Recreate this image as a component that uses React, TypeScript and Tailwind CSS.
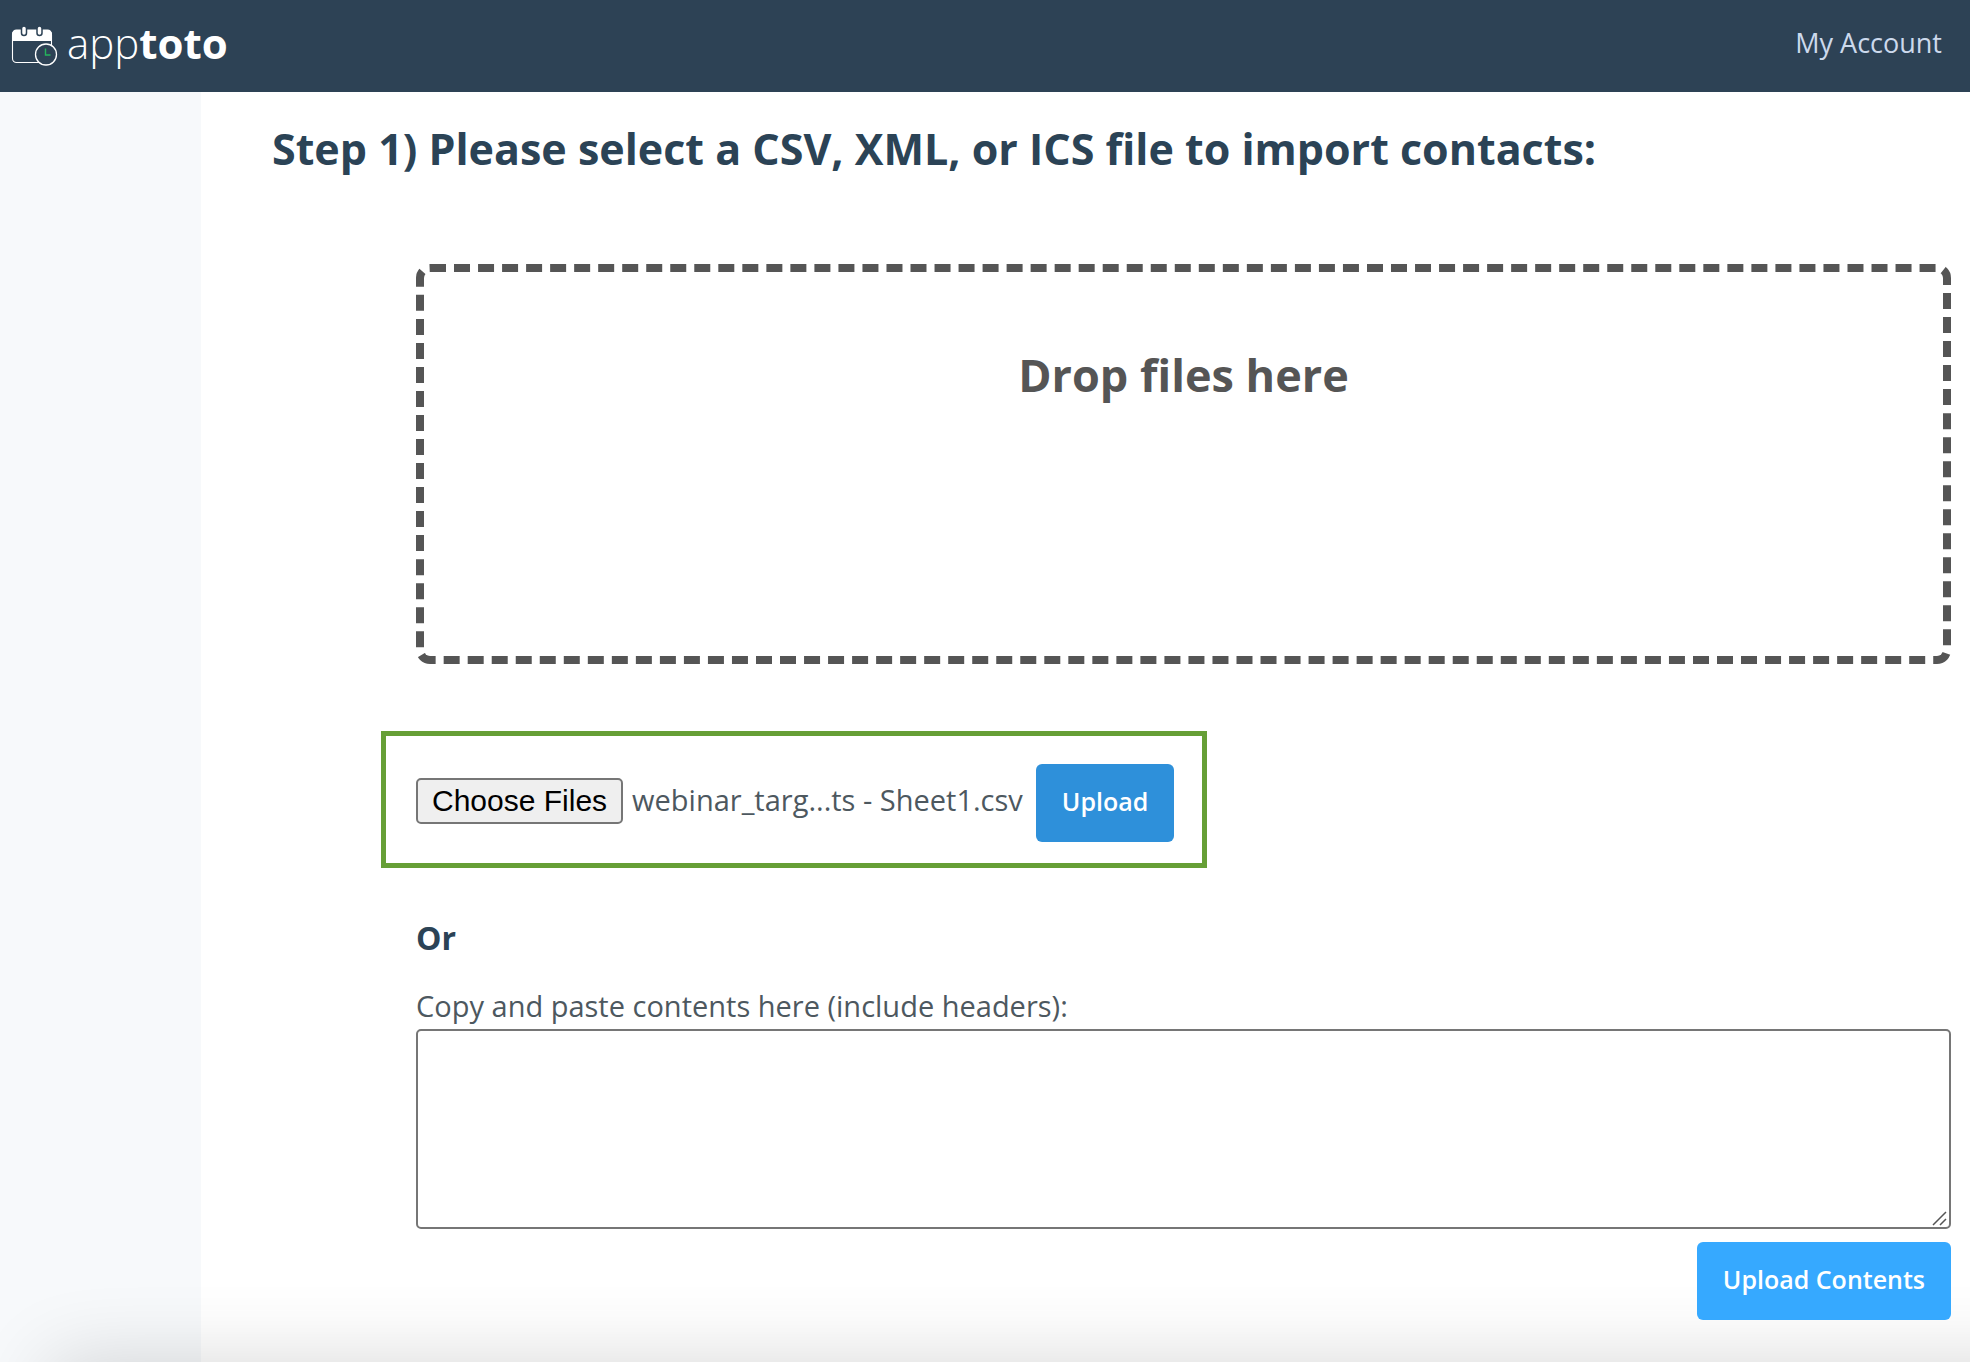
import { useRef, useState } from "react";

function LogoMark() {
  return (
    <svg className="h-[46px] w-[48px] shrink-0" viewBox="0 -4 48 46" fill="none" aria-hidden="true">
      <rect x="1.5" y="6.5" width="39" height="32" rx="4" stroke="#fff" strokeWidth="1.1" />
      <path d="M1 17V10a4.5 4.5 0 0 1 4.5-4.5H36.5A4.5 4.5 0 0 1 41 10V17Z" fill="#fff" />
      <rect x="10.5" y="2" width="5" height="9.5" rx="2.5" fill="#fff" stroke="#2d4255" strokeWidth="1.5" />
      <rect x="26" y="2" width="5" height="9.5" rx="2.5" fill="#fff" stroke="#2d4255" strokeWidth="1.5" />
      <circle cx="35" cy="30.5" r="10.5" fill="#2d4255" stroke="#fff" strokeWidth="1.3" />
      <path d="M34.5 24.5V31H39.5" stroke="#25b45c" strokeWidth="1.4" />
    </svg>
  );
}

function Header() {
  return (
    <header className="flex h-[92px] items-center justify-between bg-[#2d4255] pr-[28px] pb-[6px] pl-[11px]">
      <a href="#" aria-label="apptoto" className="flex items-center gap-[8px] text-[42px] leading-[56px] text-white">
        <LogoMark />
        <span>
          <span className="font-light">app</span>
          <span className="font-bold">toto</span>
        </span>
      </a>
      <a href="#account" className="text-[27px] leading-[40px] text-[#ccd9ec]">
        My Account
      </a>
    </header>
  );
}

function FilePicker() {
  const inputRef = useRef<HTMLInputElement>(null);
  const [name, setName] = useState("webinar_targ...ts - Sheet1.csv");
  return (
    <form
      className="-ml-[35px] mt-[67px] flex w-fit items-baseline border-[5px] border-[#669f36] pt-[28px] pr-[28px] pb-[21px] pl-[30px]"
      onSubmit={(e) => e.preventDefault()}
    >
      <input
        ref={inputRef}
        type="file"
        multiple
        hidden
        aria-label="Contact files"
        onChange={(e) => setName(e.target.files?.[0]?.name ?? "No file chosen")}
      />
      <button
        type="button"
        onClick={() => inputRef.current?.click()}
        className="rounded-[5px] border-2 border-[#767676] bg-[#efefef] px-[14px] font-['Liberation_Sans',sans-serif] text-[30px] leading-[42px] text-black"
      >
        Choose Files
      </button>
      <output className="mr-[13px] ml-[9px] text-[29px] leading-[40px] text-[#4d585f]">{name}</output>
      <button
        type="submit"
        className="rounded-[6px] bg-[#2e90da] px-[26px] pb-[4px] text-[25px] leading-[74px] font-semibold text-white"
      >
        Upload
      </button>
    </form>
  );
}

function PasteForm() {
  return (
    <form className="flex flex-col" onSubmit={(e) => e.preventDefault()}>
      <label htmlFor="contents" className="mt-[24px] text-[29px] leading-[40px] text-[#4d585f]">
        Copy and paste contents here (include headers):
      </label>
      <div className="relative mt-[3px] flex">
        <textarea
          id="contents"
          className="h-[200px] w-full resize-none rounded-[5px] border-2 border-[#767676] bg-white p-2 text-[29px]"
        />
        <svg
          className="pointer-events-none absolute right-[4px] bottom-[3px] size-[15px]"
          viewBox="0 0 15 15"
          stroke="#555"
          strokeWidth="1.5"
          aria-hidden="true"
        >
          <path d="M1 14 14 1M8 14 14 8" />
        </svg>
      </div>
      <button
        type="submit"
        className="relative z-10 mt-[13px] self-end rounded-[6px] bg-[#36a9ff] px-[26px] pb-[4px] text-[25px] leading-[74px] font-semibold text-white"
      >
        Upload Contents
      </button>
    </form>
  );
}

export default function App() {
  return (
    <div className="relative flex min-h-screen flex-col overflow-hidden bg-white font-['Open_Sans',sans-serif]">
      <Header />
      <div className="flex flex-1">
        <aside className="w-[201px] shrink-0 bg-[#f7f9fb]" />
        <main className="min-w-0 flex-1 pt-[27px] pr-[19px] pl-[71px]">
          <h1 className="text-[43px] leading-[60px] font-bold text-[#2b4356]">
            Step 1) Please select a CSV, XML, or ICS file to import contacts:
          </h1>
          <div className="pl-[144px]">
            <div className="mt-[85px] h-[400px] rounded-[14px] border-8 border-dashed border-[#555] pt-[73px] text-center text-[45px] leading-[60px] font-bold text-[#555]">
              Drop files here
            </div>
            <FilePicker />
            <h2 className="mt-[46px] text-[32px] leading-[48px] font-bold text-[#2b4356]">Or</h2>
            <PasteForm />
          </div>
        </main>
      </div>
      <div className="pointer-events-none absolute top-full -right-[100px] left-[50px] h-[200px] shadow-[0_0_80px_rgba(0,0,0,0.16)]" />
    </div>
  );
}
